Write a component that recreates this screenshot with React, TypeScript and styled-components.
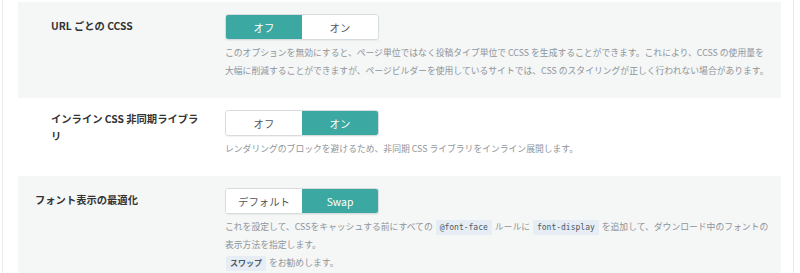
import React, { useState } from "react"
import styled, { createGlobalStyle } from "styled-components"

const GlobalStyle = createGlobalStyle`
    html, body {
        margin: 0;
        padding: 0;
        background: #fff;
        overflow: hidden;
    }
    body {
        font-family: "Noto Sans CJK JP", "Noto Sans", sans-serif;
        color: #333;
    }
`

const StyledPanel = styled.div`
    margin-left: 2px;
    width: 792px;
    box-sizing: border-box;
    border-left: 1px solid #ebebeb;
    border-right: 1px solid #ebebeb;
    padding: 2px 12px 0 15px;
    min-height: 273px;
`

const StyledRow = styled.div<{ $striped?: boolean; $indent: number }>`
    display: flex;
    align-items: flex-start;
    padding: 12px 12px 18px ${({ $indent }) => $indent}px;
    background: ${({ $striped }) => ($striped ? "#f5f6f6" : "#fff")};
`

const StyledLabel = styled.div<{ $width: number; $offset: number }>`
    flex: none;
    box-sizing: border-box;
    width: ${({ $width }) => $width}px;
    padding: ${({ $offset }) => $offset}px 24px 0 0;
    font-size: 10.3px;
    font-weight: 700;
    line-height: 17px;
    color: #333;
`

const StyledControl = styled.div`
    flex: 1;
    min-width: 0;
`

const StyledToggle = styled.div`
    display: inline-flex;
    height: 26px;
    border: 1px solid #d8dcdf;
    border-radius: 3px;
    overflow: hidden;
    box-sizing: border-box;
    box-shadow: 0 1px 1px rgba(0, 0, 0, 0.05);
    margin-bottom: 4px;
    vertical-align: top;
`

const StyledOption = styled.button<{ $active?: boolean }>`
    width: 76px;
    height: 100%;
    border: 0;
    padding: 0;
    margin: 0;
    font-family: inherit;
    font-size: 10.4px;
    cursor: pointer;
    background: ${({ $active }) => ($active ? "#3ba9a2" : "#fff")};
    color: ${({ $active }) => ($active ? "#fff" : "#555")};
`

const StyledDescription = styled.p`
    margin: 0;
    font-size: 8.8px;
    line-height: 18px;
    color: #8e959b;
    max-width: 548px;
`

const StyledCode = styled.code<{ $bold?: boolean }>`
    display: inline-block;
    font-family: "DejaVu Sans Mono", "Noto Sans CJK JP", monospace;
    font-size: 8px;
    line-height: 15px;
    font-weight: ${({ $bold }) => ($bold ? 700 : 400)};
    color: #4d5862;
    background: #e6edf4;
    border-radius: 2px;
    padding: 0 4px;
    margin: 0 1px;
`

type Option = { value: string; label: string }

const Toggle = ({ options, initial }: { options: Option[]; initial: string }) => {
    const [value, setValue] = useState(initial)
    return <StyledToggle>
        {options.map(o => (
            <StyledOption key={o.value} $active={o.value === value} onClick={() => setValue(o.value)}>
                {o.label}
            </StyledOption>
        ))}
    </StyledToggle>
}

const ON_OFF: Option[] = [
    { value: "off", label: "オフ" },
    { value: "on", label: "オン" },
]

const FONT_DISPLAY: Option[] = [
    { value: "default", label: "デフォルト" },
    { value: "swap", label: "Swap" },
]

export default function App() {
    return <>
        <GlobalStyle />
        <StyledPanel>

            <StyledRow $striped $indent={33}>
                <StyledLabel $width={174} $offset={3}>URL ごとの CCSS</StyledLabel>
                <StyledControl>
                    <Toggle options={ON_OFF} initial="off" />
                    <StyledDescription>
                        このオプションを無効にすると、ページ単位ではなく投稿タイプ単位で CCSS を生成することができます。これにより、CCSS の使用量を大幅に削減することができますが、ページビルダーを使用しているサイトでは、CSS のスタイリングが正しく行われない場合があります。
                    </StyledDescription>
                </StyledControl>
            </StyledRow>

            <StyledRow $indent={33}>
                <StyledLabel $width={174} $offset={0}>インライン CSS 非同期ライブラリ</StyledLabel>
                <StyledControl>
                    <Toggle options={ON_OFF} initial="on" />
                    <StyledDescription>
                        レンダリングのブロックを避けるため、非同期 CSS ライブラリをインライン展開します。
                    </StyledDescription>
                </StyledControl>
            </StyledRow>

            <StyledRow $striped $indent={17}>
                <StyledLabel $width={190} $offset={3}>フォント表示の最適化</StyledLabel>
                <StyledControl>
                    <Toggle options={FONT_DISPLAY} initial="swap" />
                    <StyledDescription>
                        これを設定して、CSSをキャッシュする前にすべての <StyledCode>@font-face</StyledCode> ルールに <StyledCode>font-display</StyledCode> を追加して、ダウンロード中のフォントの表示方法を指定します。
                        <br />
                        <StyledCode $bold>スワップ</StyledCode> をお勧めします。
                    </StyledDescription>
                </StyledControl>
            </StyledRow>

        </StyledPanel>
    </>
}
